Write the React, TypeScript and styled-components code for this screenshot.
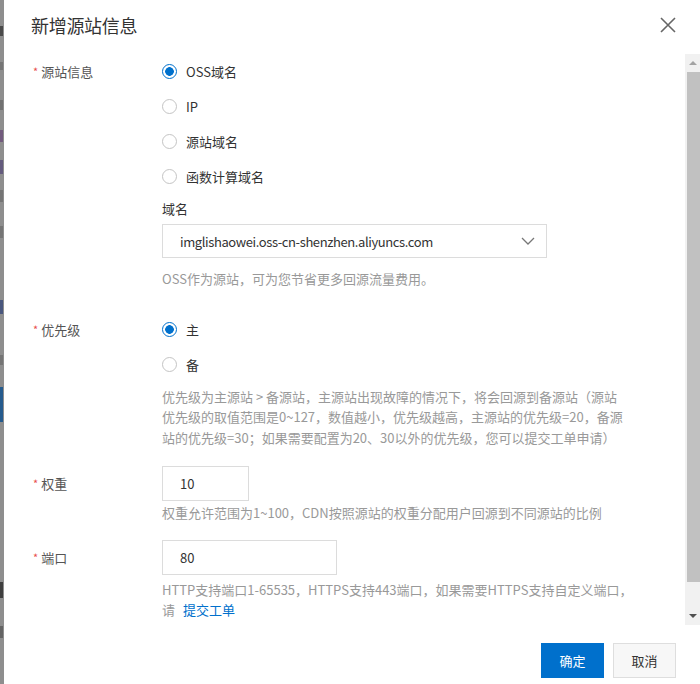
import React, { useState } from "react";
import styled, { createGlobalStyle } from "styled-components";

const GlobalStyle = createGlobalStyle`
  html, body {
    margin: 0;
    padding: 0;
    background: #fff;
  }
  body {
    font-family: "Noto Sans CJK SC", "Noto Sans", sans-serif;
    font-size: 13px;
    color: #333;
  }
`;

const ORIGIN_TYPES = ["OSS域名", "IP", "源站域名", "函数计算域名"];
const PRIORITIES = ["主", "备"];

const App: React.FC = () => {
  const [originType, setOriginType] = useState(0);
  const [priority, setPriority] = useState(0);

  return (
    <>
      <GlobalStyle />
      <Page>
        <Backdrop>
          <BackdropMark $top={26} $height={10} $color="#3a3a3a" />
          <BackdropMark $top={62} $height={8} $color="#6f6f6f" />
          <BackdropMark $top={100} $height={10} $color="#6a6a6a" />
          <BackdropMark $top={130} $height={12} $color="#6b4f7a" />
          <BackdropMark $top={160} $height={14} $color="#5a4f7a" />
          <BackdropMark $top={190} $height={12} $color="#6f6f6f" />
          <BackdropMark $top={226} $height={12} $color="#6f6f6f" />
          <BackdropMark $top={300} $height={14} $color="#3a4a7a" />
          <BackdropMark $top={355} $height={10} $color="#6f6f6f" />
          <BackdropMark $top={387} $height={35} $color="#0b4f8e" />
          <BackdropMark $top={582} $height={16} $color="#2a2a2a" />
          <BackdropMark $top={626} $height={12} $color="#5a5a5a" />
        </Backdrop>
        <Dialog>
          <Header>
            <Title>新增源站信息</Title>
            <CloseButton aria-label="关闭">
              <svg width="16" height="16" viewBox="0 0 16 16">
                <path
                  d="M1 1 L15 15 M15 1 L1 15"
                  stroke="#666"
                  strokeWidth="1.6"
                  fill="none"
                />
              </svg>
            </CloseButton>
          </Header>

          <Body>
            <Content>
              <FormItem>
                <Label>
                  <Star>*</Star>源站信息
                </Label>
                <Control>
                  <RadioGroup>
                    {ORIGIN_TYPES.map((t, i) => (
                      <RadioItem key={t} onClick={() => setOriginType(i)}>
                        <RadioCircle $checked={originType === i} />
                        <RadioText>{t}</RadioText>
                      </RadioItem>
                    ))}
                  </RadioGroup>
                  <SubLabel>域名</SubLabel>
                  <Select>
                    <SelectValue>
                      imglishaowei.oss-cn-shenzhen.aliyuncs.com
                    </SelectValue>
                    <svg width="14" height="8" viewBox="0 0 14 8">
                      <path
                        d="M1 1 L7 7 L13 1"
                        stroke="#777"
                        strokeWidth="1.3"
                        fill="none"
                      />
                    </svg>
                  </Select>
                  <Help $top={11}>OSS作为源站，可为您节省更多回源流量费用。</Help>
                </Control>
              </FormItem>

              <FormItem $top={22}>
                <Label>
                  <Star>*</Star>优先级
                </Label>
                <Control>
                  <RadioGroup>
                    {PRIORITIES.map((t, i) => (
                      <RadioItem key={t} onClick={() => setPriority(i)}>
                        <RadioCircle $checked={priority === i} />
                        <RadioText>{t}</RadioText>
                      </RadioItem>
                    ))}
                  </RadioGroup>
                  <Help $top={5}>
                    优先级为主源站 &gt; 备源站，主源站出现故障的情况下，将会回源到备源站（源站
                    <br />
                    优先级的取值范围是0~127，数值越小，优先级越高，主源站的优先级=20，备源
                    <br />
                    站的优先级=30；如果需要配置为20、30以外的优先级，您可以提交工单申请）
                  </Help>
                </Control>
              </FormItem>

              <FormItem $top={18}>
                <Label>
                  <Star>*</Star>权重
                </Label>
                <Control>
                  <TextInput $width={87} defaultValue="10" />
                  <Help $top={2}>
                    权重允许范围为1~100，CDN按照源站的权重分配用户回源到不同源站的比例
                  </Help>
                </Control>
              </FormItem>

              <FormItem $top={16}>
                <Label>
                  <Star>*</Star>端口
                </Label>
                <Control>
                  <TextInput $width={175} defaultValue="80" />
                  <Help $top={5}>
                    HTTP支持端口1-65535，HTTPS支持443端口，如果需要HTTPS支持自定义端口，
                    <br />
                    请<Link href="#">提交工单</Link>
                  </Help>
                </Control>
              </FormItem>
            </Content>

            <ScrollBar>
              <ScrollArrow $dir="up" />
              <ScrollThumb />
              <ScrollTrack />
              <ScrollArrow $dir="down" />
            </ScrollBar>
          </Body>

          <Footer>
            <Button $primary>确定</Button>
            <Button>取消</Button>
          </Footer>
        </Dialog>
      </Page>
    </>
  );
};

export default App;

const Page = styled.div`
  display: flex;
  width: 700px;
  height: 684px;
  overflow: hidden;
`;

const Backdrop = styled.div`
  position: relative;
  width: 4px;
  flex-shrink: 0;
  background: #8e8e8e;
`;

const BackdropMark = styled.span<{ $top: number; $height: number; $color: string }>`
  position: absolute;
  left: 0;
  top: ${(p) => p.$top}px;
  width: 3px;
  height: ${(p) => p.$height}px;
  background: ${(p) => p.$color};
  opacity: 0.8;
`;

const Dialog = styled.div`
  flex: 1;
  display: flex;
  flex-direction: column;
  background: #fff;
  min-width: 0;
`;

const Header = styled.div`
  height: 54px;
  display: flex;
  align-items: center;
  justify-content: space-between;
  padding: 0 24px 4px 27px;
  box-sizing: border-box;
`;

const Title = styled.h2`
  margin: 0;
  font-size: 18px;
  font-weight: 400;
  color: #333;
  letter-spacing: -0.3px;
`;

const CloseButton = styled.button`
  border: none;
  background: none;
  padding: 0;
  width: 16px;
  height: 16px;
  display: flex;
  cursor: pointer;
`;

const Body = styled.div`
  height: 571px;
  display: flex;
`;

const Content = styled.div`
  flex: 1;
  padding: 0 0 0 29px;
  overflow: hidden;
`;

const FormItem = styled.div<{ $top?: number }>`
  display: grid;
  grid-template-columns: 129px 1fr;
  margin-top: ${(p) => p.$top ?? 0}px;
`;

const Label = styled.div`
  color: #555;
  font-size: 13px;
  line-height: 35px;
  height: 35px;
  white-space: nowrap;
`;

const Star = styled.span`
  color: #e84e4e;
  font-size: 11px;
  margin-right: 3px;
  vertical-align: 1px;
`;

const Control = styled.div`
  display: flex;
  flex-direction: column;
  align-items: flex-start;
`;

const RadioGroup = styled.div`
  display: flex;
  flex-direction: column;
`;

const RadioItem = styled.label`
  height: 35px;
  display: flex;
  align-items: center;
  gap: 9px;
  cursor: pointer;
`;

const RadioCircle = styled.span<{ $checked: boolean }>`
  width: 15px;
  height: 15px;
  box-sizing: border-box;
  border-radius: 50%;
  border: 1px solid ${(p) => (p.$checked ? "#0070cc" : "#c4c4c4")};
  background: ${(p) =>
    p.$checked
      ? "radial-gradient(circle, #0070cc 0 4px, #fff 4.6px)"
      : "#fff"};
  flex-shrink: 0;
`;

const RadioText = styled.span`
  color: #333;
  font-size: 13px;
`;

const SubLabel = styled.div`
  margin-top: 5px;
  line-height: 20px;
  color: #333;
  font-size: 13px;
`;

const Select = styled.div`
  margin-top: 5px;
  width: 385px;
  height: 34px;
  box-sizing: border-box;
  border: 1px solid #dcdcdc;
  display: flex;
  align-items: center;
  justify-content: space-between;
  padding: 0 11px 0 17px;
`;

const SelectValue = styled.span`
  color: #333;
  font-size: 13px;
  letter-spacing: -0.4px;
`;

const Help = styled.div<{ $top: number }>`
  margin-top: ${(p) => p.$top}px;
  color: #999;
  font-size: 13px;
  line-height: 20.5px;
  white-space: nowrap;
`;

const TextInput = styled.input<{ $width: number }>`
  width: ${(p) => p.$width}px;
  height: 35px;
  box-sizing: border-box;
  border: 1px solid #dcdcdc;
  padding: 0 17px;
  font-family: inherit;
  font-size: 13px;
  color: #333;
  outline: none;
`;

const Link = styled.a`
  color: #0070cc;
  text-decoration: none;
  margin-left: 8px;
`;

const ScrollBar = styled.div`
  width: 15px;
  flex-shrink: 0;
  display: flex;
  flex-direction: column;
  background: #f1f1f1;
`;

const ScrollArrow = styled.div<{ $dir: "up" | "down" }>`
  height: 18px;
  display: flex;
  align-items: center;
  justify-content: center;
  &::before {
    content: "";
    border-left: 4px solid transparent;
    border-right: 4px solid transparent;
    ${(p) =>
      p.$dir === "up"
        ? "border-bottom: 4px solid #a3a3a3;"
        : "border-top: 4px solid #505050;"}
  }
`;

const ScrollThumb = styled.div`
  height: 510px;
  margin-left: 2px;
  background: #c1c1c1;
`;

const ScrollTrack = styled.div`
  flex: 1;
`;

const Footer = styled.div`
  display: flex;
  justify-content: flex-end;
  gap: 9px;
  padding: 18px 24px 0 0;
`;

const Button = styled.button<{ $primary?: boolean }>`
  width: 63px;
  height: 35px;
  box-sizing: border-box;
  font-family: inherit;
  font-size: 13px;
  cursor: pointer;
  border: 1px solid ${(p) => (p.$primary ? "#0070cc" : "#dedede")};
  background: ${(p) => (p.$primary ? "#0070cc" : "#f7f7f7")};
  color: ${(p) => (p.$primary ? "#fff" : "#333")};
`;
